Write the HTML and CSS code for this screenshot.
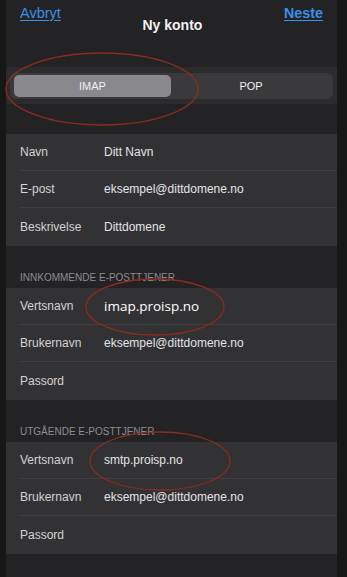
FILE: index.html
```html
<!DOCTYPE html>
<html lang="no">
<head>
    <meta charset="UTF-8">
    <meta name="viewport" content="width=device-width, initial-scale=1.0">
    <title>Ny konto</title>
    <link rel="stylesheet" href="styles.css">
</head>
<body>
    <div class="screen">
        <div class="nav">
            <a href="#" class="nav-link">Avbryt</a>
            <h1 class="nav-title">Ny konto</h1>
            <a href="#" class="nav-link nav-link-bold">Neste</a>
        </div>

        <div class="segment-band">
            <div class="segment">
                <div class="segment-item active">IMAP</div>
                <div class="segment-item">POP</div>
            </div>
        </div>

        <div class="group first">
            <div class="row"><span class="label">Navn</span><span class="value">Ditt Navn</span></div>
            <div class="row"><span class="label">E-post</span><span class="value">eksempel@dittdomene.no</span></div>
            <div class="row"><span class="label">Beskrivelse</span><span class="value">Dittdomene</span></div>
        </div>

        <div class="section-title">Innkommende e-posttjener</div>
        <div class="group">
            <div class="row"><span class="label">Vertsnavn</span><span class="value highlight">imap.proisp.no</span></div>
            <div class="row"><span class="label">Brukernavn</span><span class="value">eksempel@dittdomene.no</span></div>
            <div class="row"><span class="label">Passord</span><span class="value"></span></div>
        </div>

        <div class="section-title">Utgående e-posttjener</div>
        <div class="group">
            <div class="row"><span class="label">Vertsnavn</span><span class="value">smtp.proisp.no</span></div>
            <div class="row"><span class="label">Brukernavn</span><span class="value">eksempel@dittdomene.no</span></div>
            <div class="row"><span class="label">Passord</span><span class="value"></span></div>
        </div>
    </div>

    <!-- red hand-drawn marks on top of the screenshot -->
    <svg class="marks" width="347" height="577" viewBox="0 0 347 577">
        <ellipse cx="102" cy="89" rx="96" ry="36" />
        <ellipse cx="155" cy="307" rx="69" ry="28" />
        <ellipse cx="160" cy="461" rx="70" ry="29" />
    </svg>
</body>
</html>
```

FILE: styles.css
```css
* {
    margin: 0;
    padding: 0;
    box-sizing: border-box;
}

body {
    background: #171718;
    font-family: 'Liberation Sans', Arial, sans-serif;
    width: 347px;
    height: 577px;
    overflow: hidden;
    position: relative;
}

.screen {
    margin-left: 6px;
    width: 331px;
    height: 577px;
    background: #232325;
    color: #e2e2e4;
}

.nav {
    height: 67px;
    display: flex;
    justify-content: space-between;
    align-items: flex-start;
    padding: 5px 14px 0 14px;
}

.nav-link {
    color: #3b8fe6;
    font-size: 14.5px;
    line-height: 17px;
    text-decoration: underline;
    text-underline-offset: 2px;
}

.nav-link-bold {
    font-weight: bold;
    font-size: 14.3px;
}

.nav-title {
    font-size: 14px;
    font-weight: bold;
    color: #f2f2f4;
    line-height: 17px;
    margin-top: 12px;
}

.segment-band {
    height: 37px;
    background: #2c2c2e;
    padding: 6px 4px 5px 4px;
}

.segment {
    height: 26px;
    background: #3a3a3d;
    border-radius: 6px;
    padding: 2px;
    display: flex;
}

.segment-item {
    flex: 1;
    display: flex;
    align-items: center;
    justify-content: center;
    font-size: 11px;
    color: #f0f0f2;
    border-radius: 5px;
}

.segment-item.active {
    background: #88888d;
    flex: 0 0 157px;
    margin-left: 2px;
}

.group {
    background: #323234;
}

.group.first {
    margin-top: 30px;
}

.row {
    height: 37px;
    margin-left: 14px;
    display: flex;
    align-items: center;
    font-size: 12px;
    border-bottom: 1px solid #3f3f42;
}

.row:last-child {
    border-bottom: none;
    height: 38px;
}

.label {
    width: 84px;
    flex-shrink: 0;
    color: #d2d2d4;
}

.value {
    color: #e4e4e6;
}

.value.highlight {
    font-family: 'Open Sans', sans-serif;
    font-size: 13.5px;
    color: #ffffff;
}

.section-title {
    height: 42px;
    display: flex;
    align-items: flex-end;
    padding: 0 0 5px 14px;
    font-size: 10px;
    text-transform: uppercase;
    color: #8c8c91;
}

.marks {
    position: absolute;
    left: 0;
    top: 0;
    pointer-events: none;
}

.marks ellipse {
    fill: none;
    stroke: #8e2a20;
    stroke-width: 1.3;
}
```
